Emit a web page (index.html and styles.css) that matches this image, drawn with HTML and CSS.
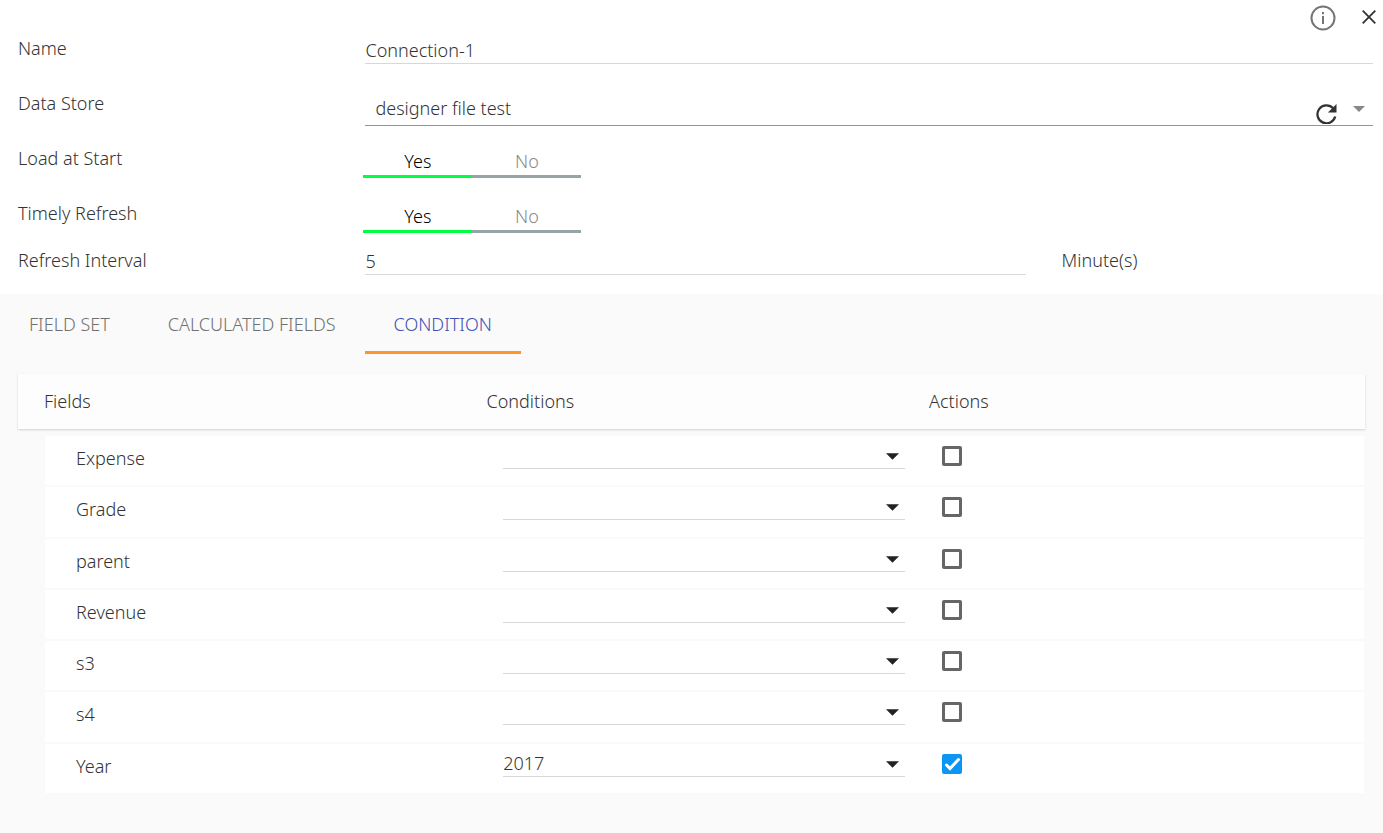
FILE: index.html
```html
<!DOCTYPE html>
<html lang="en">
<head>
<meta charset="utf-8">
<title>Connection</title>
<link rel="stylesheet" href="styles.css">
</head>
<body>
<svg class="sprite" aria-hidden="true">
  <symbol id="caret" viewBox="0 0 14 8"><path d="M0 1h14L7 8z"/></symbol>
  <symbol id="tick" viewBox="0 0 20 20"><path d="M4.500 11l3.500 3.500L16.500 5.500" fill="none" stroke="#fff" stroke-width="3" stroke-linecap="round" stroke-linejoin="miter"/></symbol>
</svg>
<form class="dialog">
  <section class="form">
    <header class="bar">
      <button type="button" class="icon-btn" aria-label="Information">
        <svg width="26" height="26" viewBox="0 0 26 26"><circle cx="13" cy="13" r="11.500" fill="none" stroke="#757575" stroke-width="2"/><path d="M12 7h2v2.200h-2zM12 11h2v8h-2z" fill="#757575"/></svg>
      </button>
      <button type="button" class="icon-btn close" aria-label="Close">
        <svg width="14" height="14" viewBox="0 0 14 14"><path d="M.7.7l12.600 12.600M13.300.7L.7 13.300" stroke="#333" stroke-width="1.800"/></svg>
      </button>
    </header>

    <div class="row">
      <label class="label" for="name">Name</label>
      <input class="text name" id="name" type="text" value="Connection-1">
    </div>
    <div class="row">
      <label class="label" for="store">Data Store</label>
      <div class="store">
        <select id="store"><option>designer file test</option></select>
        <button type="button" class="icon-btn refresh" aria-label="Refresh">
          <svg width="21" height="21" viewBox="0 0 21 21"><path d="M17.200 5.300A9 9 0 1 0 19.200 13.500" fill="none" stroke="#333" stroke-width="2.300"/><path d="M20.500 1v8.600h-8.600z" fill="#333"/></svg>
        </button>
        <svg class="caret" aria-hidden="true"><use href="#caret"/></svg>
      </div>
    </div>
    <div class="row">
      <span class="label" id="load">Load at Start</span>
      <div class="toggle" role="radiogroup" aria-labelledby="load">
        <label><input type="radio" name="load" checked><span>Yes</span></label>
        <label><input type="radio" name="load"><span>No</span></label>
      </div>
    </div>
    <div class="row">
      <span class="label" id="timely">Timely Refresh</span>
      <div class="toggle" role="radiogroup" aria-labelledby="timely">
        <label><input type="radio" name="timely" checked><span>Yes</span></label>
        <label><input type="radio" name="timely"><span>No</span></label>
      </div>
    </div>
    <div class="row interval">
      <label class="label" for="interval">Refresh Interval</label>
      <input class="text" id="interval" type="text" value="5">
      <span class="label">Minute(s)</span>
    </div>
  </section>

  <nav class="tabs" role="tablist">
    <button type="button" role="tab" aria-selected="false">FIELD SET</button>
    <button type="button" role="tab" aria-selected="false">CALCULATED FIELDS</button>
    <button type="button" role="tab" aria-selected="true">CONDITION</button>
  </nav>

  <table class="grid">
    <thead>
      <tr><th>Fields</th><th>Conditions</th><th>Actions</th></tr>
    </thead>
    <tbody>
      <tr>
        <td>Expense</td>
        <td><span class="pick"><select aria-label="Expense condition"><option></option><option>2017</option></select><svg class="caret" aria-hidden="true"><use href="#caret"/></svg></span></td>
        <td><span class="check"><input type="checkbox" aria-label="Expense action"><svg aria-hidden="true"><use href="#tick"/></svg></span></td>
      </tr>
      <tr>
        <td>Grade</td>
        <td><span class="pick"><select aria-label="Grade condition"><option></option><option>2017</option></select><svg class="caret" aria-hidden="true"><use href="#caret"/></svg></span></td>
        <td><span class="check"><input type="checkbox" aria-label="Grade action"><svg aria-hidden="true"><use href="#tick"/></svg></span></td>
      </tr>
      <tr>
        <td>parent</td>
        <td><span class="pick"><select aria-label="parent condition"><option></option><option>2017</option></select><svg class="caret" aria-hidden="true"><use href="#caret"/></svg></span></td>
        <td><span class="check"><input type="checkbox" aria-label="parent action"><svg aria-hidden="true"><use href="#tick"/></svg></span></td>
      </tr>
      <tr>
        <td>Revenue</td>
        <td><span class="pick"><select aria-label="Revenue condition"><option></option><option>2017</option></select><svg class="caret" aria-hidden="true"><use href="#caret"/></svg></span></td>
        <td><span class="check"><input type="checkbox" aria-label="Revenue action"><svg aria-hidden="true"><use href="#tick"/></svg></span></td>
      </tr>
      <tr>
        <td>s3</td>
        <td><span class="pick"><select aria-label="s3 condition"><option></option><option>2017</option></select><svg class="caret" aria-hidden="true"><use href="#caret"/></svg></span></td>
        <td><span class="check"><input type="checkbox" aria-label="s3 action"><svg aria-hidden="true"><use href="#tick"/></svg></span></td>
      </tr>
      <tr>
        <td>s4</td>
        <td><span class="pick"><select aria-label="s4 condition"><option></option><option>2017</option></select><svg class="caret" aria-hidden="true"><use href="#caret"/></svg></span></td>
        <td><span class="check"><input type="checkbox" aria-label="s4 action"><svg aria-hidden="true"><use href="#tick"/></svg></span></td>
      </tr>
      <tr>
        <td>Year</td>
        <td><span class="pick"><select aria-label="Year condition"><option></option><option selected>2017</option></select><svg class="caret" aria-hidden="true"><use href="#caret"/></svg></span></td>
        <td><span class="check"><input type="checkbox" aria-label="Year action" checked><svg aria-hidden="true"><use href="#tick"/></svg></span></td>
      </tr>
    </tbody>
  </table>
</form>
</body>
</html>
```
FILE: styles.css
```css
* {
  box-sizing: border-box;
}

body {
  margin: 0;
  background: #fafafa;
  color: #333;
  font: 300 18px/24px "Noto Sans", "Open Sans", sans-serif;
}

button,
input,
select {
  margin: 0;
  padding: 0;
  border: 0;
  border-radius: 0;
  background: none;
  color: inherit;
  font: inherit;
  appearance: none;
}

.sprite {
  display: none;
}

/* Connection settings */
.form {
  padding: 0 10px 19px 18px;
  background: #fff;
}

.bar {
  display: flex;
  justify-content: flex-end;
  align-items: center;
  gap: 26px;
  height: 36px;
  margin-right: -3px;
}

.icon-btn {
  display: flex;
  cursor: pointer;
}

.close {
  padding-bottom: 2px;
}

.row {
  display: grid;
  grid-template-columns: 1fr 2.9fr;
  align-items: start;
  min-height: 55px;
}

.row:nth-last-child(2) {
  min-height: 47px;
}

.row:last-child {
  min-height: 24px;
}

.interval {
  grid-template-columns: 1fr 1.9fr 1fr;
}

.interval .label:last-child {
  padding-left: 36px;
}

.text {
  width: 100%;
  height: 27px;
  border-bottom: 1px solid #d8d8d8;
}

.name {
  height: 28px;
}

.store {
  display: flex;
  align-items: center;
  height: 35px;
  border-bottom: 1px solid #949494;
}

.store select {
  flex: 1;
  height: 34px;
  padding-left: 10px;
}

.refresh {
  padding-top: 10px;
}

.store .caret {
  width: 12px;
  height: 7px;
  margin: 0 8px 0 16px;
  fill: #888;
}

.toggle {
  display: flex;
  margin-left: -2px;
}

.toggle label {
  position: relative;
  width: 109px;
  text-align: center;
}

.toggle input {
  position: absolute;
  inset: 0;
  opacity: 0;
}

.toggle span {
  display: block;
  padding: 3px 0 2px;
  border-bottom: 3px solid #95a5a6;
  color: #888;
}

.toggle input:checked + span {
  border-color: #00ff40;
  color: #000;
}

/* Tabs */
.tabs {
  display: flex;
}

.tabs button {
  padding: 15px 29px;
  border: solid transparent;
  border-width: 3px 0;
  color: #707070;
}

.tabs button[aria-selected="true"] {
  border-bottom-color: #ff9429;
  color: #3f51b5;
}

/* Conditions table */
.grid {
  display: block;
  margin: 20px 18px 40px;
}

.grid thead,
.grid tr {
  display: grid;
}

.grid thead {
  background: #fdfdfd;
  box-shadow: 0 1px 2px rgba(0, 0, 0, 0.16);
}

.grid thead tr {
  grid-template-columns: 33.5% 33.5% 1fr;
  padding: 15px 0 16px 26px;
}

.grid th {
  padding: 0;
  font-weight: inherit;
  text-align: left;
}

.grid tbody {
  display: grid;
  grid-auto-rows: 1fr;
  gap: 2px;
  min-height: 357px;
  margin: 7px 1px 0 27px;
}

.grid tbody tr {
  grid-template-columns: calc(33.3% + 19px) 33.3% 1fr;
  align-items: start;
  background: #fff;
}

.grid td {
  padding: 10px 37px 14px 0;
}

.grid td:first-child {
  padding-left: 31px;
}

.grid td:nth-child(2) {
  padding-top: 7px;
}

.pick,
.check {
  position: relative;
  display: block;
}

.pick select {
  display: block;
  width: 100%;
  height: 26px;
  border-bottom: 1px solid #d8d8d8;
}

.pick .caret {
  position: absolute;
  top: 9px;
  right: 6px;
  width: 13px;
  height: 8px;
  fill: #222;
  pointer-events: none;
}

.check input {
  display: block;
  width: 20px;
  height: 20px;
  border: 3px solid #666;
  border-radius: 2px;
}

.check svg {
  position: absolute;
  inset: 0;
  display: none;
  width: 20px;
  height: 20px;
  pointer-events: none;
}

.check input:checked {
  border-color: #0c96f3;
  background: #0c96f3;
}

.check input:checked + svg {
  display: block;
}
```
